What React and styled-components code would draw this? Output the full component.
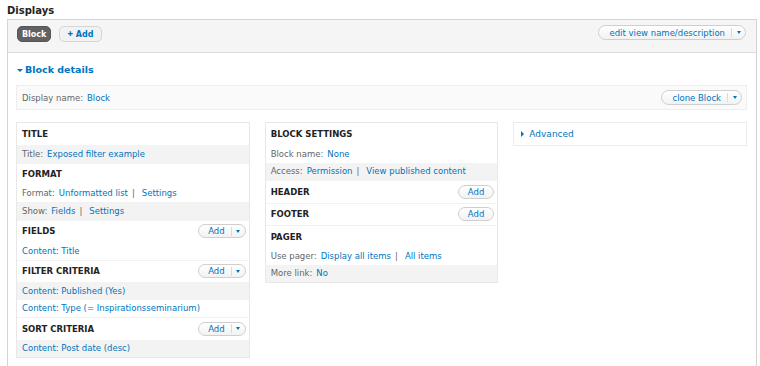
import React from "react";
import styled, { createGlobalStyle } from "styled-components";

const LINK = "#0074bd";

const GlobalStyle = createGlobalStyle`
	html, body {
		margin: 0;
		padding: 0;
		background: #fff;
		overflow: hidden;
	}
	body {
		font-family: "DejaVu Sans", Verdana, sans-serif;
		font-size: 8.5px;
		color: #333;
	}
`;

/*

Page frame

*/
const Page = styled.div`
	width: 750px;
	padding-left: 7px;
`;

const Heading = styled.h2`
	margin: 0 0 1px;
	padding-top: 4px;
	font-size: 10px;
	line-height: 14px;
	font-weight: bold;
	color: #222;
`;

const Panel = styled.div`
	border: 1px solid #d4d4d4;
	border-bottom: none;
	min-height: 360px;
`;

// grey bar holding the display tabs
const TopBar = styled.div`
	display: flex;
	align-items: flex-start;
	justify-content: space-between;
	height: 33px;
	box-sizing: border-box;
	padding: 6px 10px 0 9px;
	background: #f5f5f5;
	border-bottom: 1px solid #dcdcdc;
`;

const Tabs = styled.div`
	display: flex;
	gap: 8px;
`;

const Tab = styled.span`
	display: inline-flex;
	align-items: center;
	gap: 3px;
	height: 16px;
	box-sizing: border-box;
	padding: 0 ${props => (props.$active ? "4px" : "7px")};
	border-radius: 5px;
	font-size: 8px;
	font-weight: bold;
	color: ${props => (props.$active ? "#fff" : LINK)};
	background: ${props => (props.$active ? "#616161" : "#f2f2f2")};
	border: 1px solid ${props => (props.$active ? "#555" : "#d5d5d5")};
`;

const Plus = styled.span`
	font-size: 6.5px;
`;

/*

Dropbuttons

*/
const DropButton = styled.span`
	display: inline-flex;
	align-items: center;
	height: ${props => props.$h || 15}px;
	margin-top: ${props => props.$shift || 0}px;
	box-sizing: border-box;
	border: 1px solid #cfcfcf;
	border-radius: 9px;
	background: linear-gradient(#fff, #f2f2f2);
	color: ${LINK};
	font-weight: normal;
	text-transform: none;
	white-space: nowrap;
`;

const DropLabel = styled.span`
	padding: 0 ${props => props.$right}px 0 ${props => props.$left}px;
`;

const DropToggle = styled.span`
	display: flex;
	align-items: center;
	justify-content: center;
	width: 13px;
	height: 9px;
	border-left: 1px solid #dadada;
`;

const Caret = styled.span`
	width: 0;
	height: 0;
	border-left: ${props => props.$size || 2.5}px solid transparent;
	border-right: ${props => props.$size || 2.5}px solid transparent;
	border-top: ${props => (props.$size ? props.$size + 0.5 : 3)}px solid ${LINK};
`;

const RightCaret = styled.span`
	width: 0;
	height: 0;
	border-top: 3px solid transparent;
	border-bottom: 3px solid transparent;
	border-left: 3px solid ${LINK};
`;

/*

Details area

*/
const Body = styled.div`
	padding: 0 9px 12px 8px;
`;

const DetailsToggle = styled.div`
	display: flex;
	align-items: center;
	gap: 2px;
	margin-top: 10px;
	padding-left: 1px;
	line-height: 14px;
	font-size: 9.5px;
	font-weight: bold;
	color: ${LINK};
`;

const NameRow = styled.div`
	display: flex;
	align-items: center;
	justify-content: space-between;
	height: 25px;
	margin-top: 8px;
	box-sizing: border-box;
	padding: 0 4px 0 5px;
	background: #fafafa;
	border: 1px solid #eeeeee;
`;

const Columns = styled.div`
	display: grid;
	grid-template-columns: repeat(3, 1fr);
	gap: 15px;
	align-items: start;
	margin-top: 12px;
`;

const Column = styled.div`
	border: 1px solid #e8e8e8;
	background: #fff;
`;

const SectionHeader = styled.div`
	display: flex;
	align-items: center;
	justify-content: space-between;
	height: ${props => (props.$tall ? 22.5 : 22)}px;
	box-sizing: border-box;
	padding: 0 3px 0 5px;
	font-weight: bold;
	text-transform: uppercase;
	color: #222;
	border-top: 1px solid #f2f2f2;

	&:first-child {
		border-top: none;
	}
`;

const Row = styled.div`
	display: flex;
	align-items: center;
	height: 17.5px;
	padding: 0 5px;
	white-space: nowrap;
	background: ${props => (props.$alt ? "#f3f3f3" : "transparent")};
`;

const Label = styled.span`
	color: #666;
	margin-right: 4px;
`;

const Link = styled.span`
	color: ${LINK};
`;

const Sep = styled.span`
	color: #666;
	margin: 0 7px 0 4px;
`;

const AdvancedBox = styled.div`
	display: flex;
	align-items: center;
	gap: 5px;
	height: 24px;
	box-sizing: border-box;
	padding-left: 7px;
	border: 1px solid #ececec;
	font-size: 9px;
	color: ${LINK};
`;

const leftColumn = [
	{title: "Title", rows: [{label: "Title:", links: ["Exposed filter example"], alt: true}]},
	{
		title: "Format",
		rows: [
			{label: "Format:", links: ["Unformatted list", "Settings"]},
			{label: "Show:", links: ["Fields", "Settings"], alt: true},
		],
	},
	{title: "Fields", add: "menu", rows: [{links: ["Content: Title"]}]},
	{
		title: "Filter criteria",
		add: "menu",
		rows: [
			{links: ["Content: Published (Yes)"], alt: true},
			{links: ["Content: Type (= Inspirationsseminarium)"]},
		],
	},
	{title: "Sort criteria", add: "menu", rows: [{links: ["Content: Post date (desc)"], alt: true}]},
];

const middleColumn = [
	{
		title: "Block settings",
		rows: [
			{label: "Block name:", links: ["None"]},
			{label: "Access:", links: ["Permission", "View published content"], alt: true},
		],
	},
	{title: "Header", add: "plain", rows: []},
	{title: "Footer", add: "plain", rows: []},
	{
		title: "Pager",
		rows: [
			{label: "Use pager:", links: ["Display all items", "All items"]},
			{label: "More link:", links: ["No"], alt: true},
		],
	},
];

function AddButton({menu}) {
	if (!menu) {
		return (
			<DropButton $h={14}>
				<DropLabel $left={9} $right={9}>Add</DropLabel>
			</DropButton>
		);
	}
	return (
		<DropButton $h={14}>
			<DropLabel $left={9} $right={6}>Add</DropLabel>
			<DropToggle>
				<Caret />
			</DropToggle>
		</DropButton>
	);
}

function Section({section}) {
	return (
		<>
			<SectionHeader $tall={!!section.add}>
				<span>{section.title}</span>
				{section.add && <AddButton menu={section.add === "menu"} />}
			</SectionHeader>
			{section.rows.map((row, i) => (
				<Row key={i} $alt={row.alt}>
					{row.label && <Label>{row.label}</Label>}
					{row.links.map((link, j) => (
						<React.Fragment key={j}>
							{j > 0 && <Sep>|</Sep>}
							<Link>{link}</Link>
						</React.Fragment>
					))}
				</Row>
			))}
		</>
	);
}

export default function App() {
	return (
		<Page>
			<GlobalStyle />
			<Heading>Displays</Heading>
			<Panel>
				<TopBar>
					<Tabs>
						<Tab $active>Block</Tab>
						<Tab>
							<Plus>✚</Plus>Add
						</Tab>
					</Tabs>
					<DropButton $shift={-1}>
						<DropLabel $left={10} $right={6}>edit view name/description</DropLabel>
						<DropToggle>
							<Caret />
						</DropToggle>
					</DropButton>
				</TopBar>
				<Body>
					<DetailsToggle>
						<Caret $size={3} />
						Block details
					</DetailsToggle>
					<NameRow>
						<span>
							<Label>Display name:</Label>
							<Link>Block</Link>
						</span>
						<DropButton>
							<DropLabel $left={10} $right={6}>clone Block</DropLabel>
							<DropToggle>
								<Caret />
							</DropToggle>
						</DropButton>
					</NameRow>
					<Columns>
						<Column>
							{leftColumn.map(s => (
								<Section key={s.title} section={s} />
							))}
						</Column>
						<Column>
							{middleColumn.map(s => (
								<Section key={s.title} section={s} />
							))}
						</Column>
						<AdvancedBox>
							<RightCaret />
							Advanced
						</AdvancedBox>
					</Columns>
				</Body>
			</Panel>
		</Page>
	);
}
